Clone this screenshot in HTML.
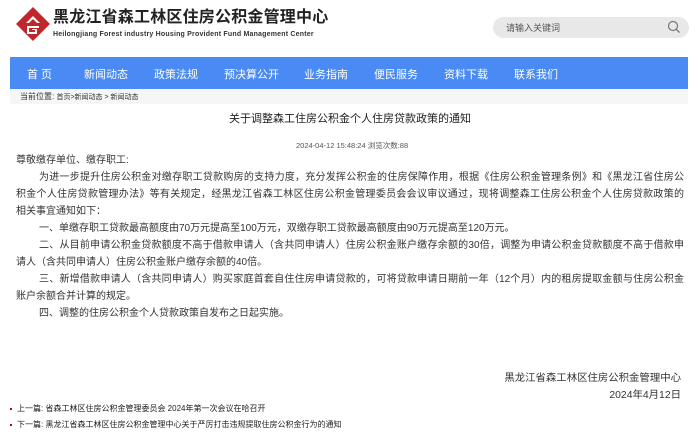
<!DOCTYPE html>
<html><head><meta charset="utf-8"><style>
*{margin:0;padding:0;box-sizing:border-box}
body{width:700px;height:439px;background:#fff;font-family:"Liberation Sans","Noto Sans CJK SC",sans-serif;color:#333;position:relative;overflow:hidden}
.abs{position:absolute;white-space:nowrap}
.nav{position:absolute;left:10px;top:57px;width:678px;height:32px;background:#4a8af4}
.nav span{position:absolute;top:9px;color:#fff;font-size:11px}
.crumb{position:absolute;left:10px;top:89px;width:678px;height:15px;background:#f6f6f6}
.l{position:absolute;left:16px;width:668px;font-size:10px;line-height:14px;color:#333;text-align:justify;text-align-last:justify;white-space:nowrap}
.l.s{text-align-last:left}
.i{padding-left:23px}
</style></head><body>
<svg class="abs" style="left:15px;top:6px" width="36" height="36" viewBox="0 0 36 36">
<rect x="6" y="6" width="24" height="24" transform="rotate(45 18 18)" fill="#c0272d"/>
<path d="M11 17 L18 10 L25 17 L22 17 L18 13 L14 17 Z" fill="#fff"/>
<path d="M12 20 H24 V22 H14 V26 H20 V24 H17 V23 H22 V28 H12 Z" fill="#fff"/>
</svg>
<div class="abs" style="left:53px;top:8px;font-size:16px;line-height:20px;font-weight:bold;color:#222;letter-spacing:0.2px">黑龙江省森工林区住房公积金管理中心</div>
<div class="abs" style="left:53px;top:31px;font-size:7px;line-height:8px;font-weight:bold;color:#333;letter-spacing:0.2px">Heilongjiang Forest industry Housing Provident Fund Management Center</div>
<div class="abs" style="left:493px;top:17px;width:196px;height:21px;border-radius:11px;background:#e8e8e8"></div>
<div class="abs" style="left:506px;top:21px;font-size:9px;color:#555">请输入关键词</div>
<svg class="abs" style="left:667px;top:20px" width="14" height="14" viewBox="0 0 14 14"><circle cx="6" cy="6" r="4.5" fill="none" stroke="#777" stroke-width="1.2"/><path d="M9.3 9.3 L12.5 12.5" stroke="#777" stroke-width="1.3"/></svg>
<div class="nav">
<span style="left:17px">首 页</span><span style="left:74px">新闻动态</span><span style="left:144px">政策法规</span><span style="left:214px">预决算公开</span><span style="left:294px">业务指南</span><span style="left:364px">便民服务</span><span style="left:434px">资料下载</span><span style="left:504px">联系我们</span>
</div>
<div class="crumb"><span class="abs" style="left:10px;top:2px;font-size:8px;color:#333">当前位置: <span style="font-size:7px">首页&gt;新闻动态 &gt; 新闻动态</span></span></div>
<div class="abs" style="left:0;width:700px;text-align:center;top:110px;font-size:11px;color:#222">关于调整森工住房公积金个人住房贷款政策的通知</div>
<div class="abs" style="left:296px;top:140px;font-size:7.5px;color:#555">2024-04-12 15:48:24 浏览次数:88</div>
<div class="l s" style="top:154px">尊敬缴存单位、缴存职工:</div>
<div class="l i" style="top:171px">为进一步提升住房公积金对缴存职工贷款购房的支持力度，充分发挥公积金的住房保障作用，根据《住房公积金管理条例》和《黑龙江省住房公</div>
<div class="l" style="top:188px">积金个人住房贷款管理办法》等有关规定，经黑龙江省森工林区住房公积金管理委员会会议审议通过，现将调整森工住房公积金个人住房贷款政策的</div>
<div class="l s" style="top:205px">相关事宜通知如下：</div>
<div class="l s i" style="top:222px">一、单缴存职工贷款最高额度由70万元提高至100万元，双缴存职工贷款最高额度由90万元提高至120万元。</div>
<div class="l i" style="top:239px">二、从目前申请公积金贷款额度不高于借款申请人（含共同申请人）住房公积金账户缴存余额的30倍，调整为申请公积金贷款额度不高于借款申</div>
<div class="l s" style="top:256px">请人（含共同申请人）住房公积金账户缴存余额的40倍。</div>
<div class="l i" style="top:273px">三、新增借款申请人（含共同申请人）购买家庭首套自住住房申请贷款的，可将贷款申请日期前一年（12个月）内的租房提取金额与住房公积金</div>
<div class="l s" style="top:290px">账户余额合并计算的规定。</div>
<div class="l s i" style="top:307px">四、调整的住房公积金个人贷款政策自发布之日起实施。</div>
<div class="abs" style="right:19px;top:369px;font-size:10.4px;color:#333">黑龙江省森工林区住房公积金管理中心</div>
<div class="abs" style="right:19px;top:386px;font-size:10.4px;color:#333">2024年4月12日</div>
<div class="abs" style="left:10px;top:408px;width:2px;height:2px;background:#c00"></div>
<div class="abs" style="left:17px;top:403px;font-size:8px;color:#222">上一篇: 省森工林区住房公积金管理委员会 2024年第一次会议在哈召开</div>
<div class="abs" style="left:10px;top:424px;width:2px;height:2px;background:#c00"></div>
<div class="abs" style="left:17px;top:419px;font-size:8px;color:#222">下一篇: 黑龙江省森工林区住房公积金管理中心关于严厉打击违规提取住房公积金行为的通知</div>
</body></html>
